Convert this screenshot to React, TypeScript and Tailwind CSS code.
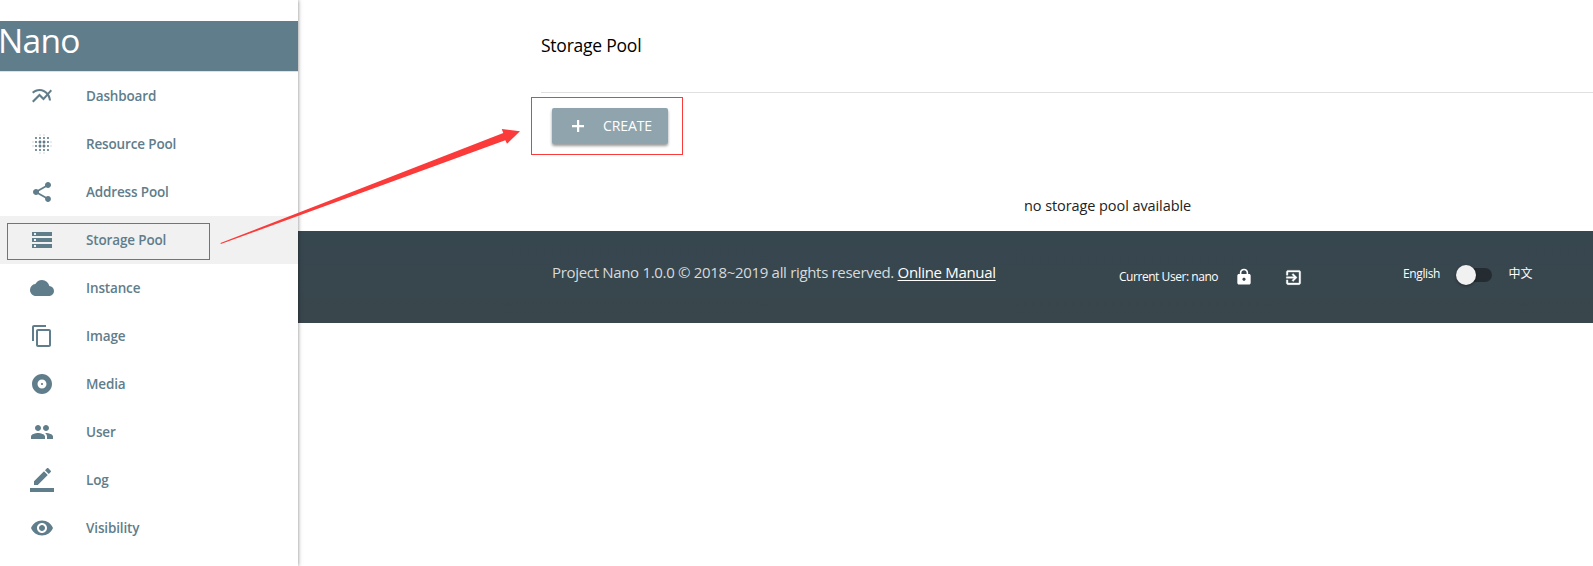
import React from "react";
import {
  MdMultilineChart, MdBlurOn, MdShare, MdStorage, MdCloud, MdContentCopy,
  MdAlbum, MdPeople, MdVisibility, MdLock,
} from "react-icons/md";

function LogIcon({ className }: { className?: string }) {
  return (
    <svg viewBox="0 0 24 24" fill="currentColor" className={className}>
      <path d="M17.75 7L14 3.25l-10 10V17h3.75l10-10zm2.960-2.960c.39-.39.39-1.020 0-1.410L18.370.29c-.39-.39-1.020-.39-1.410 0L15 2.250 18.750 6l1.960-1.960z" />
      <path d="M0 20h24v4H0z" />
    </svg>
  );
}

function PlusIcon({ className }: { className?: string }) {
  return (
    <svg viewBox="0 0 20 20" fill="currentColor" className={className}>
      <path d="M9 4h2.200v5H16v2.200h-4.800V16H9v-4.800H4V9h5z" />
    </svg>
  );
}

function ExitIcon({ className }: { className?: string }) {
  return (
    <svg viewBox="0 0 24 24" fill="currentColor" stroke="currentColor" strokeWidth="0.5" className={className}>
      <path d="M10.090 15.590L11.500 17l5-5-5-5-1.410 1.410L12.670 11H3v2h9.670l-2.580 2.590zM19 3H5c-1.110 0-2 .9-2 2v4h2V5h14v14H5v-4H3v4c0 1.100.89 2 2 2h14c1.100 0 2-.9 2-2V5c0-1.100-.9-2-2-2z" />
    </svg>
  );
}

const items = [
  { label: "Dashboard", icon: MdMultilineChart },
  { label: "Resource Pool", icon: MdBlurOn },
  { label: "Address Pool", icon: MdShare },
  { label: "Storage Pool", icon: MdStorage, active: true },
  { label: "Instance", icon: MdCloud },
  { label: "Image", icon: MdContentCopy },
  { label: "Media", icon: MdAlbum },
  { label: "User", icon: MdPeople },
  { label: "Log", icon: LogIcon },
  { label: "Visibility", icon: MdVisibility },
];

function Sidebar() {
  return (
    <aside className="relative z-10 h-full w-[298px] shrink-0 bg-white pt-[21px] shadow-[0_0_4px_rgba(0,0,0,0.5)]">
      <div className="h-[51px] border-b border-[#e0e0e0] bg-[#607d8b]">
        <div className="-ml-[2px] text-[33.5px] leading-[39px] tracking-[-0.7px] text-white">Nano</div>
      </div>
      <nav>
        {items.map(({ label, icon: Icon, active }) => (
          <div key={label} className={`flex h-12 items-center pl-[30px] text-[#607d8b] ${active ? "bg-[#f1f1f1]" : ""}`}>
            <Icon className="size-6" />
            <span className="ml-8 text-[13.5px] leading-5 font-semibold tracking-[-0.15px]">{label}</span>
          </div>
        ))}
      </nav>
    </aside>
  );
}

function Footer() {
  return (
    <footer className="flex h-[92px] bg-linear-to-b from-[#37474f] to-[#39464c] pl-[254px] text-white">
      <p className="w-[567px] pt-[30px] text-[15px] leading-[22px] tracking-[-0.32px] whitespace-nowrap text-[#d7dadc]">
        Project Nano 1.0.0 © 2018~2019 all rights reserved.{" "}
        <a className="text-white underline underline-offset-2">Online Manual</a>
      </p>
      <div className="flex h-5 w-[284px] translate-y-9 items-center text-[12px] whitespace-nowrap">
        <span className="w-[115px] font-medium tracking-[-0.45px]">Current User: nano</span>
        <MdLock className="h-[18px] w-5" preserveAspectRatio="none" />
        <ExitIcon className="ml-[30px] size-[19px]" />
      </div>
      <div className="flex h-5 translate-y-[34px] items-center text-[12px]">
        <span className="w-[53px] -translate-y-px font-medium tracking-[-0.38px]">English</span>
        <span className="flex h-[14px] w-9 items-center rounded-full bg-[#252c31]">
          <span className="size-5 shrink-0 rounded-full bg-[#f1f1f1] shadow-[0_1px_3px_rgba(0,0,0,0.4)]" />
        </span>
        <span className="ml-[16.5px] -translate-y-px">中文</span>
      </div>
    </footer>
  );
}

export default function App() {
  return (
    <div className="relative flex h-[566px] w-[1593px] overflow-hidden bg-white font-['Open_Sans','Noto_Sans_CJK_SC',sans-serif]">
      <Sidebar />
      <main className="flex-1">
        <div className="h-[231px] pl-[243px]">
          <h1 className="h-[93px] border-b border-[#e0e0e0] pt-[32px] text-[17.5px] leading-[26px] font-normal tracking-[-0.23px] text-black">Storage Pool</h1>
          <button className="mt-[15px] ml-[11px] flex h-9 w-[116px] items-center rounded-[2px] bg-[#90a4ae] pl-4 text-[14px] tracking-[-0.1px] text-white shadow-[0_2px_3px_rgba(0,0,0,0.4)]">
            <PlusIcon className="size-5" />
            <span className="ml-[15px] -translate-y-px">CREATE</span>
          </button>
          <p className="mt-[51px] pl-[483px] text-[14.5px] leading-[22px] font-normal tracking-[-0.08px] text-[#222]">no storage pool available</p>
        </div>
        <Footer />
      </main>
      <div className="absolute top-[223px] left-[7px] z-20 h-[37px] w-[203px] border border-[#fb3a3a]" />
      <div className="absolute top-[97px] left-[531px] z-20 h-[58px] w-[152px] border border-[#fb3a3a]" />
      <svg className="absolute top-[120px] left-[210px] z-20" width="320" height="130" viewBox="210 120 320 130">
        <path d="M220.500 243L503.300 133L501.700 129L520 131.300L507 143.800L505.300 140.300L220.800 244Z" fill="#fb3a3a" />
      </svg>
    </div>
  );
}
